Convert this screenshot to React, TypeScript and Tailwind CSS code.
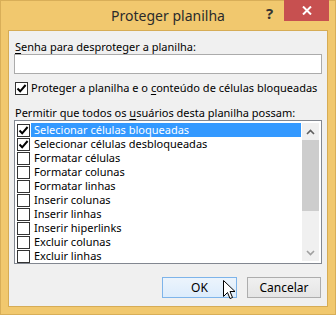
import React from "react";

const font = { fontFamily: '"Noto Sans", "Liberation Sans", sans-serif' };

function Check({ checked }: { checked: boolean }) {
  return (
    <div className="w-[13px] h-[13px] border border-[#333333] bg-white flex items-center justify-center shrink-0">
      {checked && (
        <svg width="11" height="11" viewBox="0 0 11 11">
          <path d="M1.5 5.5 L4.2 8.3 L9.6 2" stroke="#000" strokeWidth="2" fill="none" />
        </svg>
      )}
    </div>
  );
}

const items: [string, boolean][] = [
  ["Selecionar células bloqueadas", true],
  ["Selecionar células desbloqueadas", true],
  ["Formatar células", false],
  ["Formatar colunas", false],
  ["Formatar linhas", false],
  ["Inserir colunas", false],
  ["Inserir linhas", false],
  ["Inserir hiperlinks", false],
  ["Excluir colunas", false],
  ["Excluir linhas", false],
];

export default function App() {
  return (
    <div
      className="w-[336px] h-[315px] bg-[#F1C86E] border border-[#D8AE58] flex flex-col relative text-[11px] text-black whitespace-nowrap"
      style={font}
    >
      <div className="h-[29px] relative flex items-center justify-center shrink-0">
        <span className="text-[14px] text-[#2b2b2b] pb-[1px]">Proteger planilha</span>
        <span className="absolute left-[265px] top-[1px] text-[15px] font-bold text-[#333]">?</span>
        <div className="absolute left-[283px] top-[-1px] w-[45px] h-[21px] bg-[#C75050] flex items-center justify-center">
          <svg width="10" height="9" viewBox="0 0 10 9">
            <path d="M1 0.5 L9 8.5 M9 0.5 L1 8.5" stroke="#fff" strokeWidth="2" />
          </svg>
        </div>
      </div>
      <div className="mx-[7px] h-[277px] bg-[#F0F0F0] border border-[#D6AC55] flex flex-col px-[5px] pt-[9px]">
        <div className="h-[14px] leading-[14px] pl-[1px]">
          <span className="underline underline-offset-2">S</span>enha para desproteger a planilha:
        </div>
        <div className="h-[20px] border border-[#ABABAB] bg-white" />
        <div className="flex items-center gap-[3px] h-[14px] mt-[7px] pl-[1px]">
          <Check checked />
          <span className="leading-[14px]">
            Proteger a planilha e o <span className="underline underline-offset-2">c</span>onteúdo de células bloqueadas
          </span>
        </div>
        <div className="h-[14px] leading-[14px] mt-[11px] pl-[1px]">
          Permitir que todos os <span className="underline underline-offset-2">u</span>suários desta planilha possam:
        </div>
        <div className="h-[144px] border border-[#828790] bg-white flex overflow-hidden">
          <div className="flex-1 flex flex-col pt-[2px] pl-[2px]">
            {items.map(([t, c], i) => (
              <div key={t} className="h-[14px] flex items-center shrink-0">
                <Check checked={c} />
                <div
                  className={
                    "h-[14px] leading-[14px] ml-[1px] pl-[3px] flex-1 " +
                    (i === 0 ? "bg-[#3399FF] text-white" : "")
                  }
                >
                  {t}
                </div>
              </div>
            ))}
          </div>
          <div className="w-[17px] my-[2px] ml-[1px] mr-[2px] flex flex-col bg-[#F0F0F0]">
            <div className="h-[17px] flex items-center justify-center">
              <svg width="9" height="6" viewBox="0 0 9 6">
                <path d="M1 5 L4.5 1.5 L8 5" stroke="#606060" strokeWidth="1.6" fill="none" />
              </svg>
            </div>
            <div className="h-[71px] bg-[#CDCDCD]" />
            <div className="flex-1" />
            <div className="h-[17px] flex items-center justify-center">
              <svg width="9" height="6" viewBox="0 0 9 6">
                <path d="M1 1 L4.5 4.5 L8 1" stroke="#A0A0A0" strokeWidth="1.6" fill="none" />
              </svg>
            </div>
          </div>
        </div>
        <div className="flex justify-end gap-[10px] mt-[13px] pr-[1px]">
          <div className="w-[75px] h-[21px] border border-[#7EB4EA] bg-gradient-to-b from-[#ECF4FC] to-[#DCECFC] flex items-center justify-center text-[12px]">
            OK
          </div>
          <div className="w-[74px] h-[21px] border border-[#ADADAD] bg-gradient-to-b from-[#F0F0F0] to-[#E5E5E5] flex items-center justify-center text-[12px]">
            Cancelar
          </div>
        </div>
      </div>
      <svg className="absolute left-[222px] top-[279px]" width="13" height="20" viewBox="0 0 13 20">
        <path
          d="M0.5 0.5 L0.5 16.5 L4.5 12.5 L7 18.5 L9.5 17.5 L7 11.5 L12 11.5 Z"
          fill="#fff"
          stroke="#000"
          strokeWidth="1"
          strokeLinejoin="miter"
        />
      </svg>
    </div>
  );
}
